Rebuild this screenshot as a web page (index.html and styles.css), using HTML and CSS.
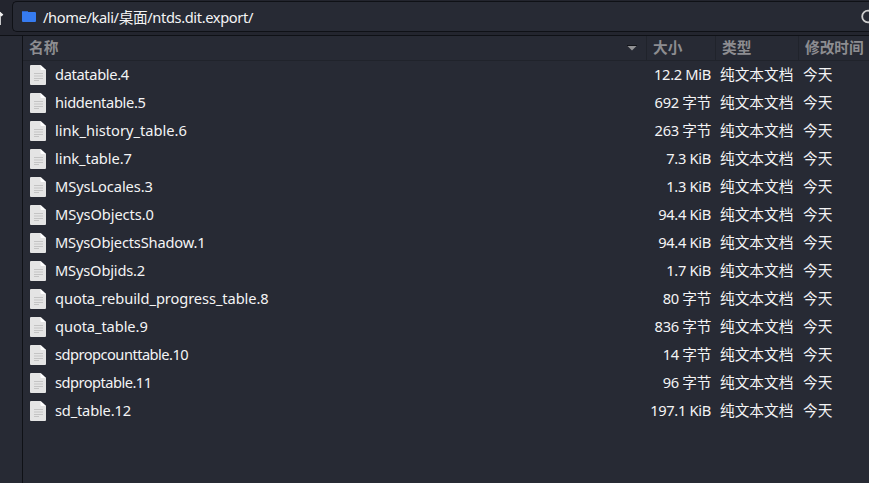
FILE: index.html
```
<!DOCTYPE html>
<html lang="zh-CN">
<head>
<meta charset="utf-8">
<title>ntds.dit.export</title>
<link rel="stylesheet" href="styles.css">
</head>
<body>
<svg class="defs" width="0" height="0">
  <symbol id="doc" viewBox="0 0 16 20">
    <path d="M1 0h9.500L16 5v14a1 1 0 0 1-1 1H1a1 1 0 0 1-1-1V1a1 1 0 0 1 1-1z" fill="#e4e4e4"/>
    <path d="M10.500 0L16 5h-4.500a1 1 0 0 1-1-1z" fill="#fff"/>
    <path d="M4 8.500h9M4 11h9M4 13.500h9M4 15.500h5" stroke="#c4c4c4" stroke-width="1"/>
  </symbol>
</svg>
<header class="toolbar">
  <svg class="up" width="12" height="16" viewBox="0 0 12 16"><path d="M-.5 2v13M-4 6L-.5 3 2.500 5.500" fill="none" stroke="#f0f0f0" stroke-width="2.600"/></svg>
  <div class="path">
    <svg class="folder" width="14" height="11" viewBox="0 0 14 11"><path d="M1 0h4l1 1h7a1 1 0 0 1 1 1v8a1 1 0 0 1-1 1H1a1 1 0 0 1-1-1V1a1 1 0 0 1 1-1z" fill="#367bf0"/><path d="M0 .5h6" stroke="#2a62c4"/></svg>
    <span class="location">/home/kali/桌面/ntds.dit.export/</span>
    <svg class="search" width="8" height="18" viewBox="0 0 8 18"><circle cx="7" cy="8.500" r="5.800" fill="none" stroke="#cfcfcf" stroke-width="1.800"/></svg>
  </div>
</header>
<main class="body">
  <aside class="side"></aside>
  <section class="list">
    <div class="row head">
      <div class="name">名称<svg width="10" height="6" viewBox="0 0 10 6"><path d="M0 .5h10L5 5.500z" fill="#929295"/><path d="M0 .5h10" stroke="#111318"/></svg></div>
      <div class="size">大小</div><div class="type">类型</div><div class="date">修改时间</div>
    </div>
    <div class="row"><div class="name"><svg><use href="#doc"/></svg><span>datatable.4</span></div><div class="size">12.2 MiB</div><div class="type">纯文本文档</div><div class="date">今天</div></div>
    <div class="row"><div class="name"><svg><use href="#doc"/></svg><span>hiddentable.5</span></div><div class="size">692 字节</div><div class="type">纯文本文档</div><div class="date">今天</div></div>
    <div class="row"><div class="name wider"><svg><use href="#doc"/></svg><span>link_history_table.6</span></div><div class="size">263 字节</div><div class="type">纯文本文档</div><div class="date">今天</div></div>
    <div class="row"><div class="name wide"><svg><use href="#doc"/></svg><span>link_table.7</span></div><div class="size">7.3 KiB</div><div class="type">纯文本文档</div><div class="date">今天</div></div>
    <div class="row"><div class="name wide"><svg><use href="#doc"/></svg><span>MSysLocales.3</span></div><div class="size">1.3 KiB</div><div class="type">纯文本文档</div><div class="date">今天</div></div>
    <div class="row"><div class="name wide"><svg><use href="#doc"/></svg><span>MSysObjects.0</span></div><div class="size">94.4 KiB</div><div class="type">纯文本文档</div><div class="date">今天</div></div>
    <div class="row"><div class="name medium"><svg><use href="#doc"/></svg><span>MSysObjectsShadow.1</span></div><div class="size">94.4 KiB</div><div class="type">纯文本文档</div><div class="date">今天</div></div>
    <div class="row"><div class="name medium"><svg><use href="#doc"/></svg><span>MSysObjids.2</span></div><div class="size">1.7 KiB</div><div class="type">纯文本文档</div><div class="date">今天</div></div>
    <div class="row"><div class="name wide"><svg><use href="#doc"/></svg><span>quota_rebuild_progress_table.8</span></div><div class="size">80 字节</div><div class="type">纯文本文档</div><div class="date">今天</div></div>
    <div class="row"><div class="name wide"><svg><use href="#doc"/></svg><span>quota_table.9</span></div><div class="size">836 字节</div><div class="type">纯文本文档</div><div class="date">今天</div></div>
    <div class="row"><div class="name tight"><svg><use href="#doc"/></svg><span>sdpropcounttable.10</span></div><div class="size">14 字节</div><div class="type">纯文本文档</div><div class="date">今天</div></div>
    <div class="row"><div class="name tight"><svg><use href="#doc"/></svg><span>sdproptable.11</span></div><div class="size">96 字节</div><div class="type">纯文本文档</div><div class="date">今天</div></div>
    <div class="row"><div class="name medium"><svg><use href="#doc"/></svg><span>sd_table.12</span></div><div class="size">197.1 KiB</div><div class="type">纯文本文档</div><div class="date">今天</div></div>
  </section>
</main>
</body>
</html>
```
FILE: styles.css
```
* { box-sizing: border-box; }
body {
  margin: 0;
  height: 483px;
  display: flex;
  flex-direction: column;
  overflow: hidden;
  background: #272a34;
  color: #f4f4f5;
  font-family: "Noto Sans", "Noto Sans CJK SC", sans-serif;
  font-size: 14.67px;
  line-height: 20px;
  white-space: nowrap;
}
.defs { position: absolute; }
.toolbar {
  flex: none;
  height: 36px;
  display: flex;
  align-items: flex-start;
  padding-top: 1px;
  background: #23252e;
  border-bottom: 1px solid #0f1116;
}
.up { flex: none; margin-top: 9px; }
.path {
  flex: 1;
  height: 31px;
  display: flex;
  align-items: center;
  padding-left: 9px;
  background: #272a34;
  border: 1px solid #0f1116;
  border-right: 0;
  border-radius: 5px 0 0 5px;
}
.location { flex: 1; margin-left: 7px; letter-spacing: -0.38px; }
.body { flex: 1; display: flex; }
.side { width: 23px; background: #272a34; border-right: 1px solid #0f1116; }
.list { flex: 1; }
.row {
  display: grid;
  grid-template-columns: 624px 69px 83px 70px;
  height: 28px;
  align-items: center;
}
.name { display: flex; align-items: center; padding-left: 7px; letter-spacing: -0.35px; }
.name.wider { letter-spacing: 0; }
.name.wide { letter-spacing: -0.09px; }
.name.medium { letter-spacing: -0.18px; }
.name.tight { letter-spacing: -0.53px; }
.name svg { flex: none; width: 16px; height: 20px; }
.name span { margin-left: 9px; padding-bottom: 2px; }
.size { padding: 0 5px 2px 0; text-align: right; letter-spacing: -0.31px; }
.type, .date { padding: 0 0 2px 4px; }
.head { height: 25px; color: #8d8d91; font-weight: 700; border-bottom: 1px solid #20232b; }
.head > div { height: 24px; line-height: 23px; letter-spacing: 0; }
.head .name { justify-content: space-between; padding: 0 9px 1px 6px; border-right: 1px solid #20232b; }
.head .name svg { width: 10px; height: 6px; margin-top: 1px; }
.head .size { text-align: left; padding: 0 0 0 6px; border-right: 1px solid #20232b; }
.head .type { padding-left: 6px; border-right: 1px solid #20232b; }
.head .date { padding-left: 6px; }
```
